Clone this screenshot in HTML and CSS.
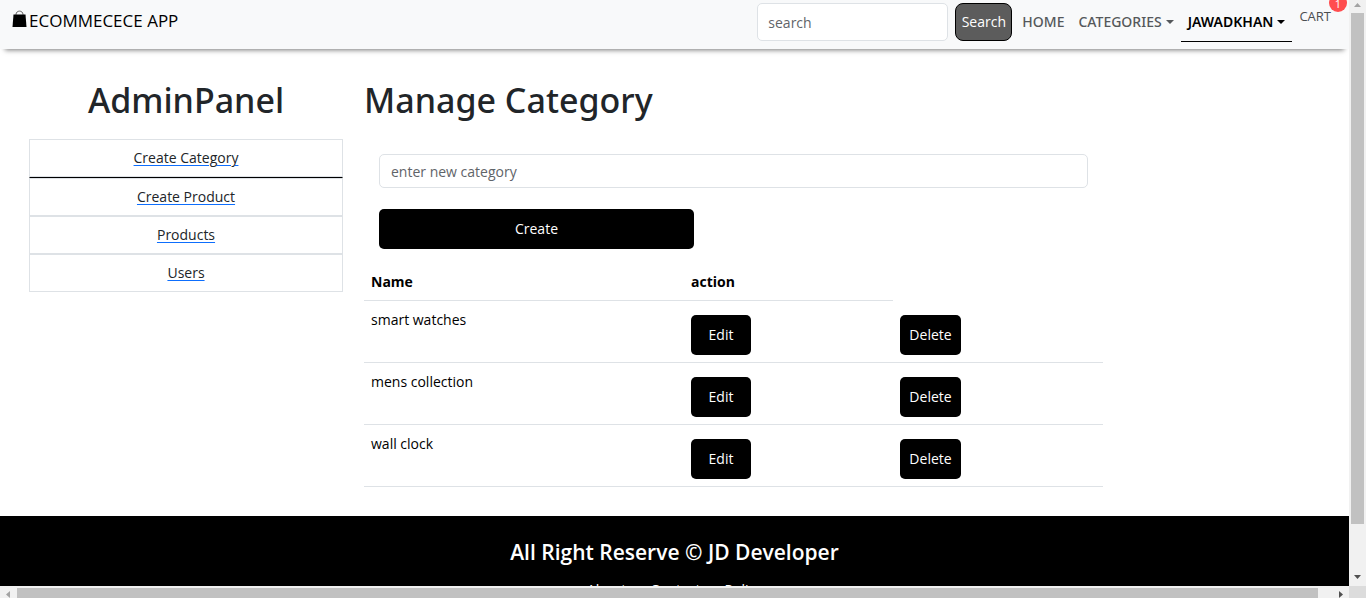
FILE: index.html
```html
<!DOCTYPE html>
<html lang="en">
<head>
<meta charset="utf-8">
<title>Manage Category</title>
<link rel="stylesheet" href="styles.css">
</head>
<body>
<div class="frame">
  <div class="page">
    <header class="navbar">
      <a class="brand" href="#">
        <svg class="bag" viewBox="0 0 14 17" aria-hidden="true"><path d="M3.5 6V4.500C3.500 0 10.500 0 10.500 4.500V6" fill="none" stroke="#666" stroke-width="1"/><path d="M1 4.500h12l1 12.500H0z"/></svg>
        <span>ECOMMECECE APP</span>
      </a>
      <nav class="menu">
        <form class="search">
          <input class="field search-field" type="search" placeholder="search" aria-label="Search">
          <button class="search-button" type="button">Search</button>
        </form>
        <a class="link" href="#">HOME</a>
        <a class="link toggle" href="#">CATEGORIES</a>
        <a class="link toggle active" href="#">JAWADKHAN</a>
        <a class="cart" href="#">CART<span class="badge">1</span></a>
      </nav>
    </header>
    <main class="content">
      <aside class="sidebar">
        <h1 class="title">AdminPanel</h1>
        <ul class="panel">
          <li class="item current"><a href="#">Create Category</a></li>
          <li class="item"><a href="#">Create Product</a></li>
          <li class="item"><a href="#">Products</a></li>
          <li class="item"><a href="#">Users</a></li>
        </ul>
      </aside>
      <section class="manage">
        <h1 class="title">Manage Category</h1>
        <form class="create">
          <input class="field" type="text" placeholder="enter new category" aria-label="New category">
          <button class="button create-button" type="button">Create</button>
        </form>
        <table class="table">
          <colgroup><col class="col-name"><col class="col-edit"><col class="col-delete"></colgroup>
          <thead><tr><th>Name</th><th>action</th></tr></thead>
          <tbody>
            <tr><td>smart watches</td><td><button class="button edit">Edit</button></td><td><button class="button delete">Delete</button></td></tr>
            <tr><td>mens collection</td><td><button class="button edit">Edit</button></td><td><button class="button delete">Delete</button></td></tr>
            <tr><td>wall clock</td><td><button class="button edit">Edit</button></td><td><button class="button delete">Delete</button></td></tr>
          </tbody>
        </table>
      </section>
    </main>
    <footer class="footer">
      <h2 class="rights">All Right Reserve © JD Developer</h2>
      <div class="footer-links"><a href="#">About</a><a href="#">Contact</a><a href="#">Policy</a></div>
    </footer>
  </div>
  <div class="bar vertical" aria-hidden="true">
    <svg class="arrow" viewBox="0 0 17 13"><path d="M5 7h7L8.500 3z" fill="#a3a3a3"/></svg>
    <div class="thumb"></div>
    <div class="track"></div>
    <svg class="arrow" viewBox="0 0 17 17"><path d="M5 6h7L8.500 10z" fill="#505050"/></svg>
  </div>
  <div class="bar horizontal" aria-hidden="true">
    <svg class="arrow" viewBox="0 0 17 12"><path d="M10 5v7L6 8.500z" fill="#a3a3a3"/></svg>
    <div class="thumb"></div>
    <div class="track"></div>
    <svg class="arrow" viewBox="0 0 17 12"><path d="M7 5v7l4-3.500z" fill="#505050"/></svg>
  </div>
  <div class="corner"></div>
</div>
</body>
</html>
```
FILE: styles.css
```css
* { box-sizing: border-box; }
body {
  margin: 0;
  font: 14px/22px "Open Sans", "Noto Sans", sans-serif;
  color: #212529;
  background: #fff;
}
a { color: inherit; text-decoration: none; }
button, input { font: inherit; }

.frame {
  display: grid;
  grid-template: minmax(0, 1fr) 12px / minmax(0, 1fr) 17px;
  height: 100vh;
}
.page { overflow: hidden; }

.navbar {
  display: flex;
  justify-content: space-between;
  height: 49px;
  padding: 3px 18px 0 12px;
  background: #f8f9fa;
  box-shadow: 0 6px 5px -5px #777;
}
.brand { display: flex; gap: 2px; height: 36px; align-items: center; font-size: 17px; color: #000; }
.bag { width: 15px; height: 17px; margin-bottom: 5px; }
.menu { display: flex; align-items: flex-start; }
.search { display: flex; gap: 7px; margin-right: 3px; }
.field {
  width: 100%;
  height: 34px;
  padding: 0 11px;
  border: 1px solid #dee2e6;
  border-radius: 5px;
  background: #fff;
  outline: 0;
}
.field::placeholder { color: #5f6469; opacity: 1; }
.search-field { width: 191px; height: 38px; padding: 0 10px; }
.search-button {
  width: 57px;
  height: 38px;
  padding: 0;
  color: #fff;
  background: #5c5c5c;
  border: 1px solid #000;
  border-radius: 8px;
}
.link { height: 39px; padding: 8px 7px; font-family: "Noto Sans", sans-serif; font-weight: 500; color: #55585b; }
.toggle::after {
  content: "";
  display: inline-block;
  margin-left: 4px;
  vertical-align: 3px;
  border: 4px solid transparent;
  border-top-color: currentColor;
  border-bottom: 0;
}
.active { color: #000; font-weight: 600; border-bottom: 1px solid #000; }
.cart { position: relative; padding: 2px 0 0 7px; font-size: 13px; color: #4b4e51; }
.badge {
  position: absolute;
  top: -9px;
  right: -16px;
  width: 18px;
  height: 18px;
  border-radius: 50%;
  background: #ff4d4f;
  color: #fff;
  font-size: 11px;
  line-height: 20px;
  text-align: center;
}

.content {
  display: grid;
  grid-template-columns: 314fr 739fr 225fr;
  gap: 21px;
  padding: 29px 0 29px 29px;
}
.title { margin: 0 0 16px; font-family: "Noto Sans", sans-serif; font-size: 34px; line-height: 45px; font-weight: 500; }
.sidebar { text-align: center; }
.panel { margin: 0; padding: 0; list-style: none; }
.item { height: 38px; padding: 7px; border: 1px solid #dee2e6; }
.current { height: 39px; box-shadow: inset 0 -1px #dee2e6; border-bottom-color: #000; }
.item a { text-decoration: underline 1px #0d6efd; text-underline-offset: 2px; }

.create { padding: 15px 15px 0; }
.button {
  display: block;
  height: 40px;
  padding: 0;
  color: #fff;
  background: #000;
  border: 0;
  border-radius: 5px;
}
.create-button { width: 315px; margin-top: 21px; }
.table {
  width: 100%;
  margin-top: 14px;
  table-layout: fixed;
  border-spacing: 0;
  color: #000;
}
.col-name { width: 320px; }
.col-edit { width: 209px; }
.table th, .table td { padding: 8px 7px 7px; border-bottom: 1px solid #dee2e6; text-align: left; vertical-align: top; }
.table th { height: 36px; font-weight: 700; }
.table td { height: 62px; }
.table .button { margin-top: 6px; }
.edit { width: 60px; }
.delete { width: 61px; }

.footer { padding: 22px 0; text-align: center; color: #fff; background: #000; }
.rights { margin: 0; font-size: 21px; line-height: 28px; font-weight: 600; }
.footer-links { display: flex; justify-content: center; gap: 24px; margin-top: 13px; }

.bar { display: flex; background: #f1f1f1; }
.thumb { background: #c1c1c1; }
.arrow { flex: none; display: block; }
.vertical { flex-direction: column; }
.vertical .thumb { flex: 511; margin: 0 2px; }
.vertical .track { flex: 45; }
.horizontal .thumb { flex: 1301; margin-top: 2px; }
.horizontal .track { flex: 14; }
.horizontal .arrow { width: 17px; height: 12px; }
.corner { background: #dcdcdc; }
```
